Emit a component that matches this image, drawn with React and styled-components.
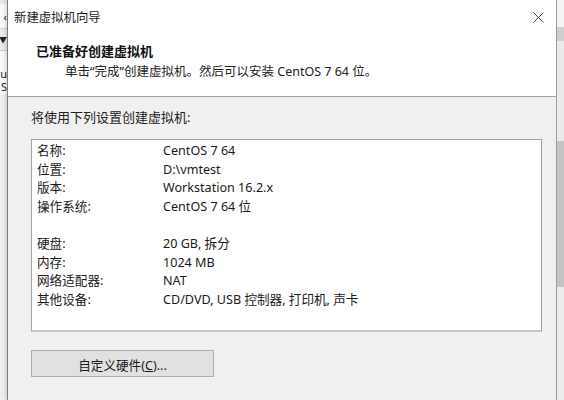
import React from "react";
import styled, { createGlobalStyle } from "styled-components";

const Global = createGlobalStyle`
  html, body { margin: 0; padding: 0; background: #e8e8e8; }
  body { font-family: "Noto Sans", "Noto Sans CJK SC", sans-serif; }
`;

const Page = styled.div`
  width: 564px;
  height: 400px;
  display: flex;
  overflow: hidden;
  background: #e8e8e8;
`;

const Strip = styled.div`
  width: ${(p) => p.$w}px;
  flex: none;
  display: flex;
  flex-direction: column;
  overflow: hidden;
`;

const StripBlock = styled.div`
  height: ${(p) => (p.$h ? `${p.$h}px` : "auto")};
  flex: ${(p) => (p.$h ? "none" : "1")};
  background: ${(p) => p.$bg};
  border-bottom: ${(p) => (p.$line ? `1px solid ${p.$line}` : "none")};
  display: flex;
  flex-direction: column;
  align-items: ${(p) => p.$align || "flex-end"};
  justify-content: ${(p) => p.$justify || "center"};
  gap: ${(p) => p.$gap || 0}px;
  padding-bottom: ${(p) => p.$pb || 0}px;
  box-sizing: border-box;
  font-size: 12px;
  line-height: 12px;
  color: #222;
  overflow: hidden;
  white-space: nowrap;
`;

const Glyph = styled.span`
  display: block;
  height: 11px;
  line-height: 11px;
  font-size: ${(p) => p.$size || 11}px;
`;

const Dialog = styled.div`
  width: 550px;
  flex: none;
  box-sizing: border-box;
  border-left: 1px solid #7d7d7d;
  border-right: 1px solid #9c9c9c;
  display: flex;
  flex-direction: column;
  background: #f0f0f0;
  box-shadow: 0 0 6px rgba(0, 0, 0, 0.25);
`;

const TitleBar = styled.div`
  height: 34px;
  background: #fff;
  display: flex;
  align-items: center;
  justify-content: space-between;
  padding: 0 12px 0 6px;
`;

const Title = styled.div`
  font-family: "Noto Sans CJK SC", sans-serif;
  font-size: 12.4px;
  color: #1a1a1a;
`;

const Header = styled.div`
  height: 63px;
  background: #fff;
  border-bottom: 1px solid #a0a0a0;
  padding: 8px 0 0 28px;
  box-sizing: border-box;
`;

const HeaderTitle = styled.div`
  font-family: "Noto Sans CJK SC", sans-serif;
  font-weight: 700;
  font-size: 13px;
  line-height: 18px;
  color: #111;
`;

const HeaderSub = styled.div`
  font-size: 12.5px;
  line-height: 18px;
  margin: 3px 0 0 29px;
  color: #222;
`;

const Body = styled.div`
  flex: 1;
  padding: 11px 14px 0 23px;
  display: flex;
  flex-direction: column;
  align-items: flex-start;
`;

const Intro = styled.div`
  font-size: 13px;
  line-height: 18px;
  color: #222;
`;

const SummaryBox = styled.div`
  margin-top: 13px;
  align-self: stretch;
  height: 193px;
  box-sizing: border-box;
  background: #fff;
  border: 1px solid #a4a4a4;
  border-bottom-width: 2px;
  border-bottom-color: #c8c8c8;
  padding: 2px 5px 1px;
  display: grid;
  grid-template-columns: 126px 1fr;
  grid-auto-rows: 18.6px;
  align-content: start;
  font-size: 12.6px;
  color: #1a1a1a;
`;

const Cell = styled.div`
  line-height: 18.6px;
  white-space: nowrap;
`;

const Button = styled.button`
  margin-top: 18px;
  width: 183px;
  height: 27px;
  background: #e1e1e1;
  border: 1px solid #adadad;
  font-family: "Noto Sans", "Noto Sans CJK SC", sans-serif;
  font-size: 12.6px;
  color: #1a1a1a;
  padding: 2px 0 0;
  cursor: default;
`;

const Ul = styled.span`
  text-decoration: underline;
`;

const rows = [
  ["名称:", "CentOS 7 64"],
  ["位置:", "D:\\vmtest"],
  ["版本:", "Workstation 16.2.x"],
  ["操作系统:", "CentOS 7 64 位"],
  ["", ""],
  ["硬盘:", "20 GB, 拆分"],
  ["内存:", "1024 MB"],
  ["网络适配器:", "NAT"],
  ["其他设备:", "CD/DVD, USB 控制器, 打印机, 声卡"],
];

const CloseIcon = () => (
  <svg width="11" height="11" viewBox="0 0 11 11">
    <path d="M0.5 0.5 L10.5 10.5 M10.5 0.5 L0.5 10.5" stroke="#444" strokeWidth="1" fill="none" />
  </svg>
);

export default function App() {
  return (
    <Page>
      <Global />
      <Strip $w={7}>
        <StripBlock $h={4} $bg="#e9e9e9" />
        <StripBlock $h={25} $bg="#fbfbfb" $line="#d6d6d6">
          <Glyph>‹</Glyph>
        </StripBlock>
        <StripBlock $h={22} $bg="#ececec" $line="#d0d0d0">
          <Glyph $size={8}>▼</Glyph>
        </StripBlock>
        <StripBlock $h={44} $bg="#fafafa" $justify="flex-end" $gap={2} $pb={3}>
          <Glyph>u</Glyph>
          <Glyph>S</Glyph>
        </StripBlock>
        <StripBlock $bg="#f0f0f0" />
      </Strip>
      <Dialog>
        <TitleBar>
          <Title>新建虚拟机向导</Title>
          <CloseIcon />
        </TitleBar>
        <Header>
          <HeaderTitle>已准备好创建虚拟机</HeaderTitle>
          <HeaderSub>单击“完成”创建虚拟机。然后可以安装 CentOS 7 64 位。</HeaderSub>
        </Header>
        <Body>
          <Intro>将使用下列设置创建虚拟机:</Intro>
          <SummaryBox>
            {rows.map(([k, v], i) => (
              <React.Fragment key={i}>
                <Cell>{k}</Cell>
                <Cell>{v}</Cell>
              </React.Fragment>
            ))}
          </SummaryBox>
          <Button>
            自定义硬件(<Ul>C</Ul>)...
          </Button>
        </Body>
      </Dialog>
      <Strip $w={7}>
        <StripBlock $h={27} $bg="#f4f4f4" />
        <StripBlock $h={14} $bg="#cfcfcf" />
        <StripBlock $h={100} $bg="#ebebeb" />
        <StripBlock $h={146} $bg="#c4c4c4" />
        <StripBlock $bg="#ececec" />
      </Strip>
    </Page>
  );
}
